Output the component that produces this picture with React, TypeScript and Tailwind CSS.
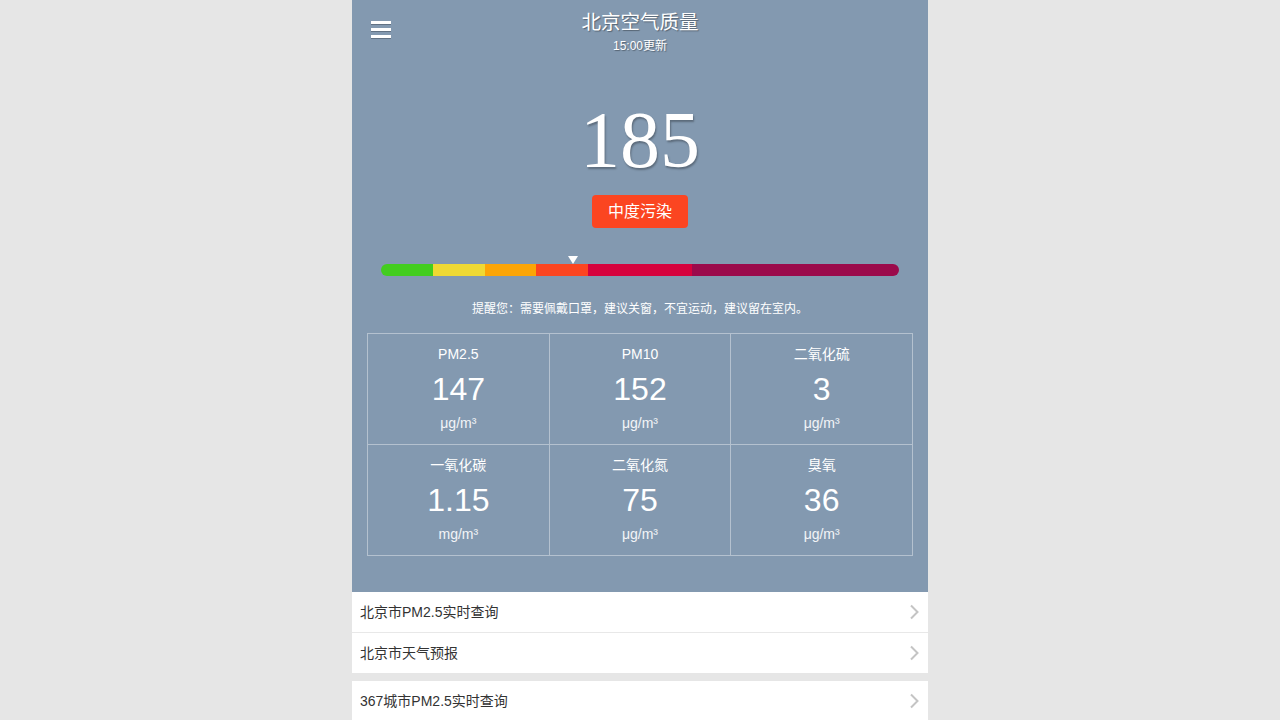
import React from "react"

const pollutants = [
  { name: "PM2.5", value: "147", unit: "μg/m³" },
  { name: "PM10", value: "152", unit: "μg/m³" },
  { name: "二氧化硫", value: "3", unit: "μg/m³" },
  { name: "一氧化碳", value: "1.15", unit: "mg/m³" },
  { name: "二氧化氮", value: "75", unit: "μg/m³" },
  { name: "臭氧", value: "36", unit: "μg/m³" },
]

// aqi scale segments, sized by their span on a 0-500 scale
const segments = [
  { span: 50, color: "bg-[#43cd1f]" },
  { span: 50, color: "bg-[#efd933]" },
  { span: 50, color: "bg-[#fca506]" },
  { span: 50, color: "bg-[#fc4520]" },
  { span: 100, color: "bg-[#d5023d]" },
  { span: 200, color: "bg-[#9b0a4b]" },
]

const aqi = 185

function Chevron() {
  return (
    <svg width="10" height="16" viewBox="0 0 10 16" className="shrink-0">
      <polyline points="2,1.5 8.5,8 2,14.5" fill="none" stroke="#c4c4c4" strokeWidth="2" />
    </svg>
  )
}

function ListRow({ text }: { text: string }) {
  return (
    <div className="h-10 bg-white flex items-center justify-between pl-2 pr-[9px]">
      <span className="text-sm text-[#333]">{text}</span>
      <Chevron />
    </div>
  )
}

export default function App() {
  const markerPct = (aqi / 500) * 100

  return (
    <div
      className="min-h-screen bg-[#e6e6e6] flex justify-center"
      style={{ fontFamily: '"Liberation Sans", "Noto Sans CJK SC", sans-serif' }}
    >
      <div className="w-[576px]">
        <div className="bg-[#8399b0] text-white pt-2 pb-[36px]">
          {/* header */}
          <div className="grid grid-cols-[1fr_auto_1fr] items-start">
            <div className="pl-[19px] pt-[13px] flex flex-col gap-1">
              <span className="block w-5 h-[3px] bg-white shadow-[0_1px_0_rgba(0,0,0,0.25)]" />
              <span className="block w-5 h-[3px] bg-white shadow-[0_1px_0_rgba(0,0,0,0.25)]" />
              <span className="block w-5 h-[3px] bg-white shadow-[0_1px_0_rgba(0,0,0,0.25)]" />
            </div>
            <div className="text-center [text-shadow:1px_1px_1px_rgba(0,0,0,0.35)]">
              <div className="text-[19.5px] leading-7">北京空气质量</div>
              <div className="text-xs leading-4 mt-[2px]">15:00更新</div>
            </div>
            <div />
          </div>

          {/* aqi */}
          <div className="flex flex-col items-center mt-[46px]">
            <div
              className="text-[80px] leading-[80px] [text-shadow:1px_2px_2px_rgba(0,0,0,0.3)]"
              style={{ fontFamily: '"Liberation Serif", serif' }}
            >
              {aqi}
            </div>
            <div className="mt-[15px] h-[33px] px-4 flex items-center rounded-[4px] bg-[#fb4521] text-base">
              中度污染
            </div>
          </div>

          {/* scale bar */}
          <div className="mx-[29px] mt-[27px]">
            <div className="relative h-[9px]">
              <svg
                width="10"
                height="9"
                viewBox="0 0 10 9"
                className="absolute top-0 -translate-x-1/2"
                style={{ left: `${markerPct}%` }}
              >
                <polygon points="0,1 10,1 5,9" fill="#fff" />
              </svg>
            </div>
            <div className="flex h-3 rounded-full overflow-hidden">
              {segments.map((s, i) => (
                <div key={i} className={s.color} style={{ flexGrow: s.span, flexBasis: 0 }} />
              ))}
            </div>
          </div>

          <div className="text-center text-xs leading-4 mt-[25px]">
            提醒您：需要佩戴口罩，建议关窗，不宜运动，建议留在室内。
          </div>

          {/* pollutant grid */}
          <div className="mx-[15px] mt-4 grid grid-cols-3 border-l border-t border-[#b4c1cf]">
            {pollutants.map((p) => (
              <div
                key={p.name}
                className="h-[111px] border-r border-b border-[#b4c1cf] flex flex-col items-center pt-[10px]"
              >
                <div className="text-sm leading-5">{p.name}</div>
                <div className="text-[32px] leading-9 mt-[7px]">{p.value}</div>
                <div className="text-sm leading-5 mt-[6px] text-white/90">{p.unit}</div>
              </div>
            ))}
          </div>
        </div>

        {/* links */}
        <div className="flex flex-col">
          <ListRow text="北京市PM2.5实时查询" />
          <div className="h-px bg-[#e8e8e8]" />
          <ListRow text="北京市天气预报" />
          <div className="h-2 bg-[#e6e6e6]" />
          <ListRow text="367城市PM2.5实时查询" />
        </div>
      </div>
    </div>
  )
}
